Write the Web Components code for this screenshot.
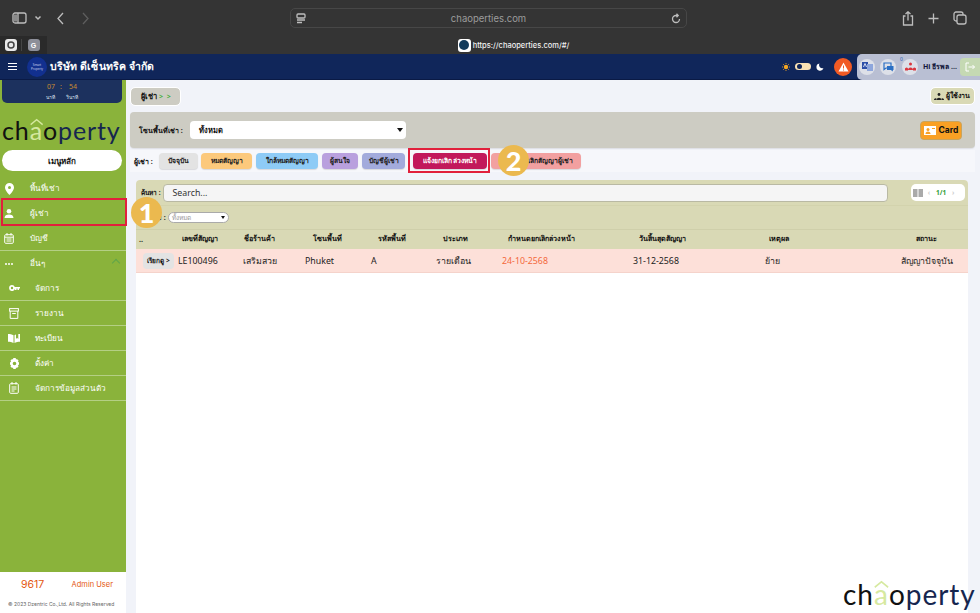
<!DOCTYPE html>
<html>
<head>
<meta charset="utf-8">
<style>
  html, body { margin: 0; height: 100%; overflow: hidden; }
  body { font-family: "Noto Sans", "Liberation Sans", sans-serif; background: #f1f3f9; width: 980px; height: 613px; position: relative; }
  .work { display: flex; height: 533px; }
</style>
</head>
<body>
<browser-bar></browser-bar>
<app-header></app-header>
<div class="work">
  <side-nav></side-nav>
  <lease-page></lease-page>
</div>
<mark-box style="left:1px;top:198px;width:122px;height:24px"></mark-box>
<mark-box style="left:408px;top:148px;width:78px;height:21px"></mark-box>
<step-dot style="left:131px;top:197px">1</step-dot>
<step-dot style="left:498px;top:145px">2</step-dot>
<brand-logo style="position:absolute;left:843px;top:580px;font-size:28px"></brand-logo>

<script>
class BrowserBar extends HTMLElement {
  constructor() {
    super();
    this.attachShadow({ mode: 'open' }).innerHTML = `
    <style>
      :host { display: block; height: 54px; background: #343434; color: #c9c9c9; font-family: Inter, "Liberation Sans", sans-serif; }
      .tools { height: 36px; display: flex; align-items: center; padding: 0 13px 0 12px; box-sizing: border-box; }
      svg { fill: none; stroke: #bdbdbd; stroke-width: 1.3; display: block; }
      .left { display: flex; align-items: center; width: 278px; }
      .url { width: 397px; height: 20px; border: 1px solid #474747; border-radius: 5px; display: flex; align-items: center; box-sizing: border-box; padding: 0 5px; font-size: 9.5px; color: #9c9c9c; }
      .url span { flex: 1; text-align: center; }
      .right { flex: 1; display: flex; justify-content: flex-end; gap: 13px; align-items: center; }
      .tabs { height: 18px; display: flex; position: relative; }
      .tab-pack { width: 47px; background: #2a2a2a; display: flex; align-items: center; }
      .tab { width: 23px; display: flex; justify-content: center; }
      .tab:first-child { width: 21px; }
      .tab + .tab { border-left: 1px solid #454545; }
      .ico { width: 12px; height: 12px; border-radius: 3px; display: flex; align-items: center; justify-content: center; }
      .title { flex: 1; display: flex; align-items: center; justify-content: center; gap: 2px; font-size: 7.5px; font-weight: 500; color: #f0f0f0; }
      .fav { width: 13px; height: 13px; background: #fff; border-radius: 3px; display: flex; align-items: center; justify-content: center; }
      .fav i { width: 10px; height: 10px; border-radius: 50%; background: #123a5a; }
    </style>
    <div class="tools">
      <div class="left">
        <svg width="15" height="12" viewBox="0 0 15 12"><rect x="1" y="1" width="13" height="10" rx="2"/><path d="M6 1v10"/><path d="M2 2.500h3v7H2z" fill="#8a8a8a" stroke="none"/></svg>
        <svg width="8" height="6" viewBox="0 0 8 6" style="margin-left:7px;stroke-width:1.500"><path d="M1.500 1.500 4 4l2.500-2.500"/></svg>
        <svg width="9" height="13" viewBox="0 0 9 13" style="margin-left:14px"><path d="M7 1 2 6.500 7 12"/></svg>
        <svg width="9" height="13" viewBox="0 0 9 13" style="margin-left:16px;stroke:#5e5e5e"><path d="M2 1l5 5.500L2 12"/></svg>
      </div>
      <div class="url">
        <svg width="10" height="11" viewBox="0 0 10 11"><rect x="1" y="1" width="8" height="4" rx="1"/><path d="M1 7h8M1 9.500h5"/></svg>
        <span>chaoperties.com</span>
        <svg width="10" height="11" viewBox="0 0 10 11"><path d="M8.500 6a3.500 3.500 0 1 1-3.500-3.500H7M5.500.8 7.200 2.500 5.500 4.200"/></svg>
      </div>
      <div class="right">
        <svg width="12" height="15" viewBox="0 0 12 15"><path d="M3.500 5H1.500v9h9V5h-2M6 9.500V1M3.500 3 6 .8 8.500 3"/></svg>
        <svg width="13" height="13" viewBox="0 0 13 13"><path d="M6.500 1.500v10M1.500 6.500h10"/></svg>
        <svg width="14" height="14" viewBox="0 0 14 14"><rect x="1" y="1" width="9" height="9" rx="2"/><rect x="4" y="4" width="9" height="9" rx="2" fill="#343434"/></svg>
      </div>
    </div>
    <div class="tabs">
      <div class="tab-pack">
        <div class="tab"><div class="ico" style="background:#e9e9e9"><svg width="10" height="10" viewBox="0 0 10 10" style="stroke:#444;stroke-width:1.500"><circle cx="5" cy="5" r="3"/></svg></div></div>
        <div class="tab"><div class="ico" style="background:#8d8f99;color:#fff;font-size:7px;font-weight:700;font-family:'Liberation Sans'">G</div></div>
      </div>
      <div class="title"><span class="fav"><i></i></span>https://chaoperties.com/#/</div>
    </div>`;
  }
}

class AppHeader extends HTMLElement {
  constructor() {
    super();
    this.attachShadow({ mode: 'open' }).innerHTML = `
    <style>
      :host { display: flex; height: 26px; background: #10265a; align-items: center; color: #fff; border-bottom: 1px solid #0a1a45; box-sizing: border-box; }
      .burger { width: 9px; height: 7px; margin-left: 8px; border-top: 1.500px solid #fff; border-bottom: 1.500px solid #fff; position: relative; box-sizing: border-box; }
      .burger::after { content: ""; position: absolute; left: 0; right: 0; top: 1.500px; border-top: 1.500px solid #fff; }
      .logo { width: 20px; height: 20px; border-radius: 50%; background: #12308f; margin-left: 10px; font-size: 3px; text-align: center; line-height: 4px; display: flex; align-items: center; justify-content: center; color: #cfd6ee; }
      h1 { margin: 0 0 0 3px; font-size: 10.500px; font-weight: 700; letter-spacing: .1px; white-space: nowrap; }
      .space { flex: 1; }
      .mode { display: flex; align-items: center; }
      .toggle { width: 16px; height: 7px; background: #fbe3b4; border-radius: 4px; position: relative; margin: 0 5px 0 5px; }
      .toggle::after { content: ""; position: absolute; left: 2px; top: 1px; width: 5px; height: 5px; border-radius: 50%; background: #10265a; }
      .alert { width: 18px; height: 18px; border-radius: 50%; background: #f15a24; margin: 0 5px 0 10px; display: flex; align-items: center; justify-content: center; }
      .user { width: 123px; height: 26px; background: #b9bfd3; border-radius: 5px 0 0 5px; display: flex; align-items: center; padding-left: 2px; box-sizing: border-box; }
      .round { width: 16px; height: 16px; border-radius: 50%; background: #dde0e8; display: flex; align-items: center; justify-content: center; position: relative; flex: none; }
      .hi { color: #11163a; font-size: 7px; font-weight: 700; margin-left: 6px; white-space: nowrap; flex: 1; }
      .out { width: 20px; height: 18px; background: #c5d9b3; display: flex; align-items: center; justify-content: center; border-radius: 4px 0 0 4px; flex: none; }
      sup { position: absolute; left: -2px; top: -3px; font-size: 5px; color: #2c5fb8; line-height: 6px; }
    </style>
    <div class="burger"></div>
    <div class="logo">Smart<br>Property</div>
    <h1>บริษัท ดีเซ็นทริค จำกัด</h1>
    <div class="space"></div>
    <div class="mode">
      <svg width="8" height="8" viewBox="0 0 8 8"><circle cx="4" cy="4" r="2.200" fill="#f5a623"/><path d="M4 0v1M4 7v1M0 4h1M7 4h1M1 1l.8.8M6.200 6.200l.8.8M7 1l-.8.8M1.800 6.200 1 7" stroke="#f5a623" stroke-width=".8"/></svg>
      <span class="toggle"></span>
      <svg width="8" height="8" viewBox="0 0 8 8"><path d="M3.500.500A3.600 3.600 0 1 0 7.500 5 3.200 3.200 0 0 1 3.500.500z" fill="#fff"/></svg>
    </div>
    <div class="alert"><svg width="11" height="10" viewBox="0 0 11 10"><path d="M5.500.500 10.500 9.500H.5z" fill="#fff"/><path d="M5.500 3.500v3M5.500 7.500v1" stroke="#f15a24"/></svg></div>
    <div class="user">
      <div class="round"><svg width="11" height="11" viewBox="0 0 11 11"><rect x="0" y="1" width="6" height="7" fill="#2d4fa8"/><rect x="5" y="3" width="6" height="7" fill="#8ea6dc"/><path d="M1.500 6l1.500-3.500L4.500 6" stroke="#fff" fill="none" stroke-width=".8"/></svg></div>
      <div class="round" style="margin-left:5px"><svg width="11" height="10" viewBox="0 0 11 10"><path d="M1 1h7v5H3L1 7.500z" fill="none" stroke="#2a6fc4" stroke-width="1.200"/><path d="M4 4h6.500v4H10l-.5 1.500L8 8H4z" fill="#2a6fc4"/></svg></div>
      <div class="round" style="margin-left:6px"><sup>0</sup><svg width="11" height="9" viewBox="0 0 11 9"><circle cx="5.500" cy="2" r="1.500" fill="#d9363e"/><path d="M3 8a2.500 2.500 0 0 1 5 0zM0 8.500a1.800 1.800 0 0 1 3 -2v2zM11 8.500a1.800 1.800 0 0 0-3-2v2z" fill="#d9363e"/></svg></div>
      <div class="hi" style="margin-left:5px">Hi ธีรพล ...</div>
      <div class="out"><svg width="10" height="10" viewBox="0 0 10 10" fill="none" stroke="#fff" stroke-width="1"><path d="M4 1H1v8h3M3.500 5h6M7.500 3l2 2-2 2"/></svg></div>
    </div>`;
  }
}

class BrandLogo extends HTMLElement {
  constructor() {
    super();
    this.attachShadow({ mode: 'open' }).innerHTML = `
    <style>
      :host { display: inline-block; font-family: Lato, "Noto Sans", sans-serif; font-weight: 400; line-height: 1; white-space: nowrap; color: #16264f; letter-spacing: .035em; }
      .k { color: #111; }
      .a { color: #d6e9a0; position: relative; display: inline-block; }
      .a svg { position: absolute; left: 0; top: .04em; width: 100%; height: .24em; overflow: visible; }
    </style>
    <span class="k">ch</span><span class="a">a<svg viewBox="0 0 20 8" preserveAspectRatio="none"><path d="M1 7.500 10 1l9 6.500" fill="none" stroke="#d6e9a0" stroke-width="2"/></svg></span><span class="k">o</span>perty`;
  }
}

class NavItem extends HTMLElement {
  constructor() {
    super();
    this.attachShadow({ mode: 'open' }).innerHTML = `
    <style>
      :host { display: flex; align-items: center; height: 25px; box-sizing: border-box; color: #fff; font-size: 8.200px; font-weight: 500; padding-left: 3px; }
      :host([sub]) { padding-left: 8px; border-bottom: 1px solid #b4cf84; }
      .i { width: 12px; height: 12px; display: flex; align-items: center; justify-content: center; }
      .t { margin-left: 15px; white-space: nowrap; }
    </style>
    <span class="i"><slot name="icon"></slot></span><span class="t"><slot></slot></span>`;
  }
}

class SideNav extends HTMLElement {
  constructor() {
    super();
    this.attachShadow({ mode: 'open' }).innerHTML = `
    <style>
      :host { display: flex; flex-direction: column; width: 126px; height: 533px; background: #fff; flex: none; }
      .green { background: #8ab33b; height: 492px; overflow: hidden; }
      .clock { margin: 0 4px 0 2px; height: 23px; background: #1c315e; border-radius: 0 0 5px 5px; color: #c98b32; font-size: 7px; line-height: 11px; padding-top: 1px; box-sizing: border-box; }
      .clock div { display: flex; justify-content: center; gap: 5px; }
      .clock .u { color: #dfe4ef; font-size: 5px; line-height: 10px; gap: 11px; }
      .brand { padding: 10px 0 0 2px; font-size: 25px; height: 45px; box-sizing: border-box; }
      .main { margin: 2px 4px 5px 2px; height: 21px; background: #fff; border-radius: 11px; color: #111; text-align: center; line-height: 21px; font-size: 8px; font-weight: 700; }
      hr { border: 0; border-top: 1px solid #b4cf84; margin: 0; }
      .other { position: relative; }
      .other b { position: absolute; right: 7px; top: 9px; width: 5px; height: 5px; border-left: 1px solid #5fa54a; border-top: 1px solid #5fa54a; transform: rotate(45deg); }
      .foot { flex: 1; font-family: Inter, "Liberation Sans", sans-serif; }
      .row { display: flex; justify-content: space-between; padding: 5px 13px 0 21px; color: #e4570f; align-items: center; height: 19px; box-sizing: border-box; }
      .row span:first-child { font-size: 10.500px; }
      .row span:last-child { font-size: 7.500px; }
      .copy { font-size: 5px; color: #666; padding: 10px 0 0 8px; white-space: nowrap; }
      svg { display: block; fill: #fff; }
    </style>
    <div class="green">
      <div class="clock"><div><span>07</span><span>:</span><span style="margin-left:2px">54</span></div><div class="u"><span>นาที</span><span>วินาที</span></div></div>
      <div class="brand"><brand-logo></brand-logo></div>
      <div class="main">เมนูหลัก</div>
      <nav-item><svg slot="icon" width="9" height="12" viewBox="0 0 9 12"><path fill-rule="evenodd" d="M4.500 0a4.500 4.500 0 0 1 4.500 4.500C9 7.500 4.500 12 4.500 12S0 7.500 0 4.500A4.500 4.500 0 0 1 4.500 0zm0 3a1.500 1.500 0 1 0 0 3 1.500 1.500 0 0 0 0-3z"/></svg>พื้นที่เช่า</nav-item>
      <nav-item><svg slot="icon" width="10" height="9" viewBox="0 0 10 9"><circle cx="5" cy="2.300" r="2.300"/><path d="M.5 9c0-2.500 2-3.500 4.500-3.500S9.500 6.500 9.500 9z"/></svg>ผู้เช่า</nav-item>
      <nav-item style="height:24px"><svg slot="icon" width="10" height="11" viewBox="0 0 10 11" style="fill:none;stroke:#fff"><rect x=".7" y="1.700" width="8.600" height="8.600" rx="1"/><path d="M.7 4.200h8.600M3 0v2.500M7 0v2.500M2.500 6h5M2.500 8h5"/></svg>บัญชี</nav-item>
      <hr>
      <div class="other"><nav-item><svg slot="icon" width="8" height="2" viewBox="0 0 8 2"><circle cx="1" cy="1" r="1"/><circle cx="4" cy="1" r="1"/><circle cx="7" cy="1" r="1"/></svg>อื่นๆ</nav-item><b></b></div>
      <nav-item sub><svg slot="icon" width="11" height="6" viewBox="0 0 11 6"><path fill-rule="evenodd" d="M3 0a3 3 0 0 1 2.800 2H11v1.500H10V5H8.500V3.500H7.500V5H6V3.800A3 3 0 1 1 3 0zm0 1.800a1.200 1.200 0 1 0 0 2.400 1.200 1.200 0 0 0 0-2.400z"/></svg>จัดการ</nav-item>
      <nav-item sub><svg slot="icon" width="10" height="11" viewBox="0 0 10 11" style="fill:none;stroke:#fff"><rect x=".6" y=".6" width="8.800" height="2.500"/><path d="M1.200 3.100v7.300h7.600V3.100M3.200 5.500h3.600"/></svg>รายงาน</nav-item>
      <nav-item sub><svg slot="icon" width="12" height="10" viewBox="0 0 12 10"><path d="M0 1c2 0 4 .3 5.500 1.300V10C4 9 2 8.700 0 8.700zM12 1c-.6 0-1.100 0-1.700.1V6L9 4.800 8 6V1.600c-.6.200-1 .4-1.500.7V10c1.500-1 3.500-1.300 5.500-1.300z"/></svg>ทะเบียน</nav-item>
      <nav-item sub><svg slot="icon" width="11" height="11" viewBox="0 0 11 11"><path fill-rule="evenodd" d="M4.300 0h2.400l.3 1.500 1-.5 1.600 1.700-.8 1.200 1.200.4v2.400l-1.200.4.800 1.200L8 10l-1-.5-.3 1.500H4.300L4 9.500l-1 .5L1.400 8.300l.8-1.200L1 6.700V4.300l1.200-.4-.8-1.200L3 1l1 .5zM5.500 3.700a1.800 1.800 0 1 0 0 3.600 1.800 1.800 0 0 0 0-3.600z"/></svg>ตั้งค่า</nav-item>
      <nav-item sub><svg slot="icon" width="10" height="12" viewBox="0 0 10 12" style="fill:none;stroke:#fff"><rect x=".7" y="1.700" width="8.600" height="9.600" rx="1"/><path d="M3 0v2.500M7 0v2.500M2.500 5h5M2.500 7h5M2.500 9h3"/></svg>จัดการข้อมูลส่วนตัว</nav-item>
    </div>
    <div class="foot">
      <div class="row"><span>9617</span><span>Admin User</span></div>
      <div class="copy">© 2023 Dzentric Co.,Ltd. All Rights Reserved</div>
    </div>`;
  }
}

class TabPill extends HTMLElement {
  constructor() {
    super();
    this.attachShadow({ mode: 'open' }).innerHTML = `
    <style>
      :host { display: block; height: 16px; line-height: 16px; width: var(--w); border-radius: 4px; background: var(--bg, #ddd); color: var(--fg, #222); font-size: 6.800px; font-weight: 700; white-space: nowrap; box-shadow: 0 1px 1px rgba(0,0,0,.12); text-align: center; box-sizing: border-box; }
    </style><slot></slot>`;
  }
}

class LeaseRow extends HTMLElement {
  constructor() {
    super();
    this.attachShadow({ mode: 'open' }).innerHTML = `
    <style>
      :host { display: grid; align-items: center; white-space: nowrap; box-sizing: border-box; }
      :host([head]) { height: 20px; grid-template-columns: 43px 62px 69px 65px 65px 65px 131px 130px 147px 1fr; padding: 0 0 2px 3px; font-size: 7.200px; font-weight: 700; color: #111; background: #d9d9b5; border-top: 1px solid #cfcfaa; }
      :host(:not([head])) { height: 24px; grid-template-columns: 35px 65px 62px 66px 65px 66px 131px 132px 136px 1fr; padding-left: 7px; font-size: 8.800px; color: #222; background: #fde0d9; border-bottom: 1px solid #f5d3cb; }
    </style><slot></slot>`;
  }
}

class LeasePage extends HTMLElement {
  constructor() {
    super();
    this.attachShadow({ mode: 'open' }).innerHTML = `
    <style>
      :host { display: flex; flex-direction: column; flex: 1; height: 533px; padding: 8px 5px 0 4px; box-sizing: border-box; min-width: 0; color: #111; }
      .top { display: flex; justify-content: space-between; align-items: flex-start; height: 24px; padding-left: 1px; }
      .crumb { width: 49px; height: 17px; line-height: 17px; padding-left: 10px; box-sizing: border-box; background: #cdccc3; border-radius: 4px; outline: 1px solid #fff; font-size: 7.500px; font-weight: 700; }
      .crumb i { color: #3fae3a; font-style: normal; letter-spacing: 1px; font-size: 7px; }
      .staff { width: 43px; height: 16px; line-height: 16px; padding-left: 3px; box-sizing: border-box; background: #d9d9b5; border-radius: 4px; outline: 1px solid #fff; font-size: 7px; font-weight: 700; display: flex; align-items: center; gap: 2px; white-space: nowrap; margin: 0 1px 0 0; }
      .zone { height: 36px; background: #cdccc3; border-radius: 4px; display: flex; align-items: center; padding: 0 13px 0 9px; font-size: 7px; font-weight: 700; box-shadow: 0 1px 1px rgba(0,0,0,.08); }
      .picker { width: 216px; height: 18px; background: #fff; border-radius: 4px; margin-left: 7px; display: flex; align-items: center; justify-content: space-between; padding: 0 3px 0 9px; box-sizing: border-box; font-size: 7.500px; }
      .caret { width: 0; height: 0; border: 3px solid transparent; border-top: 4px solid #111; border-bottom: 0; }
      .card { margin-left: auto; width: 42px; height: 19px; background: #f9a024; border-radius: 4px; border: 1px solid #c9a45d; box-sizing: border-box; display: flex; align-items: center; justify-content: center; gap: 3px; font: 700 8.500px Inter, "Liberation Sans", sans-serif; }
      .tabs { margin-top: 2px; height: 22px; background: #f6f7fb; display: flex; align-items: center; gap: 4px; padding-left: 4px; font-size: 7px; font-weight: 700; }
      .tabs .lab { width: 21px; white-space: nowrap; }
      .panel { margin: 8px 7px 0 6px; flex: 1; background: #fff; border-radius: 4px 4px 0 0; display: flex; flex-direction: column; }
      .search { background: #d9d9b5; border-radius: 4px 4px 0 0; height: 26px; display: flex; align-items: center; padding: 0 3px 0 5px; font-size: 6.500px; font-weight: 700; border-bottom: 1px solid #d3d3ad; box-sizing: border-box; white-space: nowrap; }
      .box { position: relative; width: 725px; height: 18px; background: #f5f5f5; border: 1px solid #b9b9a3; border-radius: 4px; box-sizing: border-box; margin-left: 2px; padding-left: 9px; font-size: 8.800px; font-weight: 400; line-height: 17px; color: #333; }
      .pager { margin-left: auto; width: 54px; height: 17px; background: #fff; border-radius: 5px; display: flex; align-items: center; padding-left: 2px; color: #2f9e37; font-size: 6.500px; box-sizing: border-box; }
      .pager i { color: #ccc; font-style: normal; width: 8px; text-align: center; }
      .status { background: #d9d9b5; height: 23px; display: flex; align-items: center; padding-left: 5px; font-size: 7px; font-weight: 700; white-space: nowrap; }
      .mini { width: 61px; height: 11px; background: #fff; border: 1px solid #aaa; border-radius: 6px; margin-left: 2px; display: flex; align-items: center; justify-content: space-between; padding: 0 3px 0 3px; box-sizing: border-box; color: #9a9a9a; font-weight: 400; font-size: 6.500px; }
      .mini .caret { border-width: 2px; border-top-width: 3px; }
      .go { width: 31px; height: 16px; line-height: 16px; background: #e3e3e3; border-radius: 4px; text-align: center; font-size: 6.500px; font-weight: 700; color: #111; }
      .late { color: #f4693c; }
    </style>
    <div class="top">
      <div class="crumb">ผู้เช่า <i>&gt; &gt;</i></div>
      <div class="staff"><svg width="10" height="7" viewBox="0 0 10 7" fill="#222"><circle cx="5" cy="1.500" r="1.400"/><path d="M2.700 7a2.300 2.300 0 0 1 4.600 0zM0 7a1.600 1.600 0 0 1 2.500-1.400V7zM10 7a1.600 1.600 0 0 0-2.500-1.400V7z"/></svg>ผู้ใช้งาน</div>
    </div>
    <div class="zone">โซนพื้นที่เช่า :
      <div class="picker"><span>ทั้งหมด</span><span class="caret"></span></div>
      <div class="card"><svg width="12" height="9" viewBox="0 0 12 9"><rect width="12" height="9" fill="#fff"/><circle cx="4" cy="3.500" r="1.500" fill="#f9a024"/><path d="M1.500 8a2.500 2.500 0 0 1 5 0zM8 2h3v1H8z" fill="#f9a024"/></svg>Card</div>
    </div>
    <div class="tabs">
      <span class="lab">ผู้เช่า :</span>
      <tab-pill style="--bg:#e3e3e3;--w:39px">ปัจจุบัน</tab-pill>
      <tab-pill style="--bg:#fcc97c;--w:51px;margin-left:-1px">หมดสัญญา</tab-pill>
      <tab-pill style="--bg:#8ecbf6;--w:62px">ใกล้หมดสัญญา</tab-pill>
      <tab-pill style="--bg:#b9a0de;--w:36px">ผู้สนใจ</tab-pill>
      <tab-pill style="--bg:#a3abdc;--w:43px">บัญชีผู้เช่า</tab-pill>
      <tab-pill style="--bg:#c2185b;--fg:#fff;--w:74px;margin-left:4px">แจ้งยกเลิก ล่วงหน้า</tab-pill>
      <tab-pill style="--bg:#f2a0a0;--w:90px;padding-left:20px">ยกเลิกสัญญาผู้เช่า</tab-pill>
    </div>
    <div class="panel">
      <div class="search">ค้นหา :
        <div class="box">Search...</div>
        <div class="pager"><svg width="10" height="8" viewBox="0 0 10 8"><path d="M0 0h4.500v8H0zM5.500 0H10v8H5.500z" fill="#aaa"/></svg><i style="margin-left:2px">‹</i><span style="margin:0 3px;font-weight:700">1/1</span><i>›</i></div>
      </div>
      <div class="status">สถานะ : <div class="mini"><span>ทั้งหมด</span><span class="caret"></span></div></div>
      <lease-row head>
        <span>..</span><span>เลขที่สัญญา</span><span>ชื่อร้านค้า</span><span>โซนพื้นที่</span><span>รหัสพื้นที่</span><span>ประเภท</span><span>กำหนดยกเลิกล่วงหน้า</span><span>วันสิ้นสุดสัญญา</span><span>เหตุผล</span><span>สถานะ</span>
      </lease-row>
      <lease-row>
        <span class="go">เรียกดู &gt;</span><span>LE100496</span><span>เสริมสวย</span><span>Phuket</span><span>A</span><span>รายเดือน</span><span class="late">24-10-2568</span><span>31-12-2568</span><span>ย้าย</span><span>สัญญาปัจจุบัน</span>
      </lease-row>
    </div>`;
  }
}

class MarkBox extends HTMLElement {
  constructor() {
    super();
    this.attachShadow({ mode: 'open' }).innerHTML = `
    <style>:host { display: block; position: absolute; border: 2px solid #e1203c; }</style>`;
  }
}

class StepDot extends HTMLElement {
  constructor() {
    super();
    this.attachShadow({ mode: 'open' }).innerHTML = `
    <style>:host { display: block; position: absolute; width: 31px; height: 31px; border-radius: 50%; background: #ebb94f; color: #fff; font: 900 27px/31px Lato, "Noto Sans", sans-serif; text-align: center; }</style><slot></slot>`;
  }
}

customElements.define('brand-logo', BrandLogo);
customElements.define('browser-bar', BrowserBar);
customElements.define('app-header', AppHeader);
customElements.define('nav-item', NavItem);
customElements.define('side-nav', SideNav);
customElements.define('tab-pill', TabPill);
customElements.define('lease-row', LeaseRow);
customElements.define('lease-page', LeasePage);
customElements.define('mark-box', MarkBox);
customElements.define('step-dot', StepDot);
</script>
</body>
</html>
